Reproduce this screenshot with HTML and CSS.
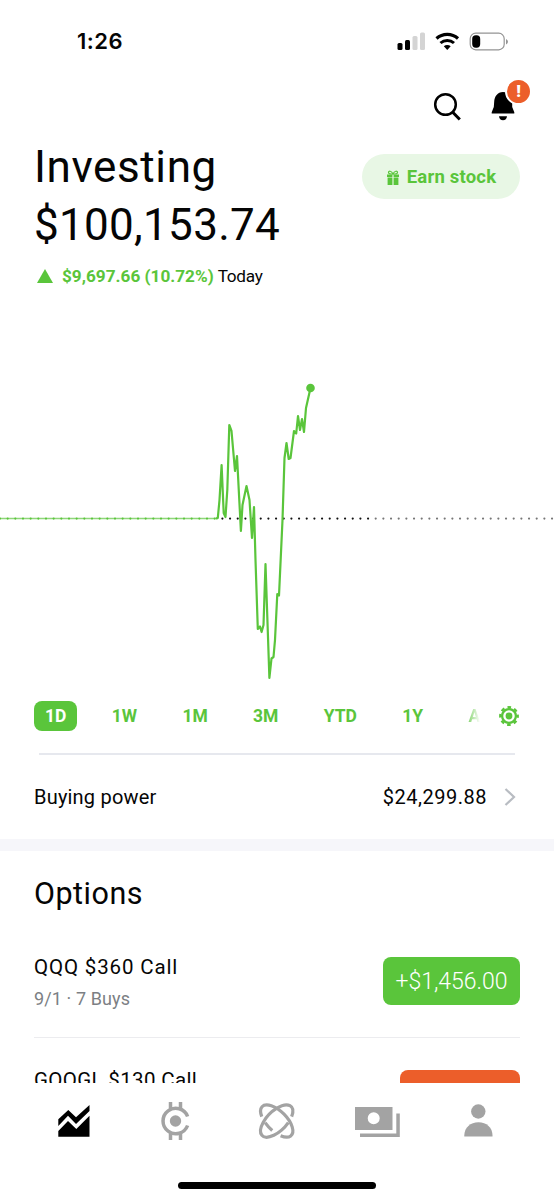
FILE: index.html
```html
<!DOCTYPE html>
<html lang="en">
<head>
    <meta charset="UTF-8">
    <meta name="viewport" content="width=device-width, initial-scale=1.0">
    <title>Investing</title>
    <link rel="stylesheet" href="styles.css">
</head>
<body>
    <div class="screen">

        <!-- Status bar -->
        <div class="status-bar">
            <span class="time">1:26</span>
            <svg class="status-icons" width="112" height="22" viewBox="0 0 112 22">
                <rect x="0.5" y="12" width="5" height="7" rx="1.5"/>
                <rect x="8" y="9" width="5" height="10" rx="1.5"/>
                <rect x="15.5" y="5" width="5" height="14" rx="1.5" fill="#d4d4d4"/>
                <rect x="23" y="1.5" width="5" height="17.5" rx="1.5" fill="#d4d4d4"/>
                <path d="M39.5 7.500a16 16 0 0 1 21.500 0" fill="none" stroke="#000" stroke-width="3.200"/>
                <path d="M43.500 12a10 10 0 0 1 13.500 0" fill="none" stroke="#000" stroke-width="3"/>
                <path d="M46.800 15.300a5 5 0 0 1 6.900 0L50.250 19z"/>
                <rect x="73.200" y="2.200" width="34" height="16.600" rx="5.500" fill="none" stroke="#949494" stroke-width="1.200"/>
                <rect x="75.200" y="4.300" width="8" height="12.400" rx="3.600"/>
                <path d="M109 8v5.500q2-1 2-2.750T109 8z" fill="#949494"/>
            </svg>
        </div>

        <div class="actions">
            <svg width="30" height="30" viewBox="0 0 30 30" fill="none" stroke="#000">
                <circle cx="12.500" cy="12.500" r="10.300" stroke-width="2.500"/>
                <path d="M19.500 20l7.300 7.500" stroke-width="3"/>
            </svg>
            <div class="bell">
                <svg width="24" height="30" viewBox="0 0 24 30">
                    <path d="M12 0C6.500 0 3.500 4.500 3.200 9.500L2.800 15 .7 20.300V21.500H23.300V20.300L21.200 15V9.500C20.500 4 17.500 0 12 0z"/>
                    <path d="M8 24.300h8q-.5 4-4 4t-4-4z"/>
                </svg>
                <span class="badge">!</span>
            </div>
        </div>

        <!-- Portfolio value -->
        <div class="portfolio">
            <div>
                <h1>Investing</h1>
                <div class="balance">$100,153.74</div>
                <div class="change">
                    <span class="triangle"></span>
                    <span class="gain">$9,697.66 (10.72%)</span>
                    <span class="today">Today</span>
                </div>
            </div>
            <button class="earn">
                <svg width="12" height="15" viewBox="0 0 12 15" fill="currentColor">
                    <path d="M0 4.500h5.400v2.500H0zM6.600 4.500H12v2.500H6.600zM.6 7.500h4.800V15H.6zM6.600 7.500h4.800V15H6.600z"/>
                    <path d="M6 4C4 4 1.500 4 1.500 2.400S4.500 .4 6 4C7.500 .4 10.500 .8 10.500 2.400S8 4 6 4z" fill="none" stroke="currentColor" stroke-width="1.200"/>
                </svg>
                <span>Earn stock</span>
            </button>
        </div>

        <svg class="chart" width="554" height="390" viewBox="0 300 554 390">
            <path class="dots" d="M222.400 518.600H372"/>
            <path class="dots closed" d="M375.700 518.600H554"/>
            <path class="flat" d="M0 518.500H218"/>
            <path class="flat-dots" d="M0 518.600H218"/>
            <polyline class="line" points="216,518.300 217.800,518 219.500,500 221.600,465 223.700,513 225.500,517 227.300,490 229.300,425 231.500,431 235,471 237,456 240.900,531 242.500,505 246.500,486 249.500,500 252,538 254,507 255.500,560 257.800,629 260,626.500 261.600,632 263.500,625 265.500,564 269.400,678 271.500,658.500 273.500,657 275,640 277.300,594 279,595.500 282.500,520 284.500,458 286.500,443 288.700,459 290.500,458 294,431 296.200,433.500 298,416 300,430 302,419 304,432 306,408 310.500,388"/>
            <circle cx="310.500" cy="388" r="4.300"/>
        </svg>

        <div class="ranges">
            <div class="range active">1D</div>
            <div class="range">1W</div>
            <div class="range">1M</div>
            <div class="range">3M</div>
            <div class="range">YTD</div>
            <div class="range">1Y</div>
            <div class="range faded">A</div>
            <svg class="gear" width="20" height="20" viewBox="-10 -10 20 20" fill="none" stroke="currentColor">
                <circle r="6.900" stroke-width="2.300"/>
                <circle r="8.700" stroke-width="2.400" stroke-dasharray="3.600 3.233" stroke-dashoffset="1.800"/>
                <circle r="3.400" fill="currentColor" stroke="none"/>
            </svg>
        </div>

        <div class="buying-power">
            <span>Buying power</span>
            <span class="amount">$24,299.88</span>
            <svg width="12" height="18" viewBox="0 0 12 18" fill="none" stroke="#b8bcc2" stroke-width="2.200">
                <path d="M1.500 1L10 9l-8.500 8"/>
            </svg>
        </div>

        <!-- Positions -->
        <div class="options">
            <h2>Options</h2>
            <div class="position">
                <div>
                    <div class="name wide">QQQ $360 Call</div>
                    <div class="detail">9/1 · 7 Buys</div>
                </div>
                <div class="value">+$1,456.00</div>
            </div>
            <div class="position">
                <div>
                    <div class="name">GOOGL $130 Call</div>
                    <div class="detail">&nbsp;</div>
                </div>
                <div class="value loss"></div>
            </div>
        </div>

        <!-- Bottom navigation -->
        <div class="tab-bar">
            <div class="tabs">
                <svg width="46" height="46" viewBox="0 0 46 46" fill="#000">
                    <path d="M7.300 21.300L17.300 12l7.700 7.300L38.500 7v6L25 26l-8-8.300L7.300 28z"/>
                    <path d="M7.300 33L17 23l8.300 8L38.500 17.700v21H7.300z"/>
                </svg>
                <svg width="46" height="46" viewBox="0 0 46 46" fill="none" stroke="#a3a3a3" stroke-width="3.500">
                    <path d="M35.600 18.500A12.700 12.700 0 1 0 35.600 27.500"/>
                    <path d="M18.500 4v7.500M28.500 4v7.500M18.500 34.500V42M28.500 34.500V42"/>
                    <circle cx="23.500" cy="23" r="5.700" fill="#a3a3a3" stroke="none"/>
                </svg>
                <svg width="46" height="46" viewBox="0 0 46 46" fill="none" stroke="#a3a3a3" stroke-width="3.200">
                    <g transform="translate(23.700 23) rotate(45)">
                        <path d="M-13.700 7.430A20.500 10 0 1 1 13.200 7.660"/>
                        <path d="M-7 9.400A20.500 10 0 0 0 3.560 9.850"/>
                    </g>
                    <g transform="translate(23.700 23) scale(-1 1) rotate(45)">
                        <path d="M-13.700 7.430A20.500 10 0 1 1 -7 9.400"/>
                    </g>
                </svg>
                <svg width="46" height="46" viewBox="0 0 46 46" fill="#a3a3a3">
                    <path fill-rule="evenodd" d="M1 9h37.500v23H1zM19.700 14.300a6 6 0 1 0 0 12 6 6 0 0 0 0-12z"/>
                    <path d="M42.300 15.500h3.500v23.500H6V35.500H42.300z"/>
                </svg>
                <svg width="46" height="46" viewBox="0 0 46 46" fill="#a3a3a3">
                    <circle cx="23.300" cy="13.500" r="7.200"/>
                    <path d="M9.300 38.500v-1C9.300 29.500 15.500 24.200 23.500 24.200S37.500 29.500 37.500 37.500v1z"/>
                </svg>
            </div>
            <div class="home-indicator"></div>
        </div>
    </div>
</body>
</html>
```

FILE: styles.css
```css
* {
    box-sizing: border-box;
}

body {
    margin: 0;
    background: #fff;
    color: #050505;
    font-family: Roboto, "Liberation Sans", sans-serif;
}

.screen {
    width: 554px;
    height: 1200px;
    display: flex;
    flex-direction: column;
    overflow: hidden;
}

.status-bar {
    height: 82px;
    flex-shrink: 0;
    display: flex;
    justify-content: space-between;
    padding: 28px 45px 0 77px;
}

.time {
    font-family: Inter, sans-serif;
    font-size: 22px;
    font-weight: 600;
    line-height: 27px;
    letter-spacing: 0.5px;
}

.status-icons {
    margin-top: 3px;
}

.actions {
    height: 56px;
    flex-shrink: 0;
    display: flex;
    justify-content: flex-end;
    gap: 28px;
    padding: 10px 39px 0 0;
}

.bell {
    position: relative;
}

.badge {
    position: absolute;
    top: -14px;
    right: -17px;
    width: 27px;
    height: 27px;
    border: 2px solid #fff;
    border-radius: 50%;
    background: #ec5e2a;
    color: #fff;
    font-size: 17px;
    font-weight: 900;
    line-height: 23px;
    text-align: center;
}

.portfolio {
    height: 162px;
    flex-shrink: 0;
    display: flex;
    justify-content: space-between;
    align-items: flex-start;
    padding: 0 34px;
}

h1,
.balance {
    margin: 0;
    font-size: 44px;
    font-weight: 400;
    line-height: 58px;
    letter-spacing: 0.3px;
}

h1 {
    letter-spacing: 0.6px;
}

.change {
    display: flex;
    align-items: center;
    height: 44px;
    font-size: 17.2px;
}

.triangle {
    margin: 0 9px 0 3px;
    border-left: 8px solid transparent;
    border-right: 8px solid transparent;
    border-bottom: 14px solid #5ac53b;
}

.gain {
    color: #5ac53b;
    font-weight: 700;
    margin-right: 4px;
}

.today {
    letter-spacing: -0.3px;
}

.earn {
    display: flex;
    align-items: center;
    justify-content: center;
    gap: 8px;
    width: 158px;
    height: 45px;
    margin-top: 16px;
    padding: 1px 0 0 1px;
    border: none;
    border-radius: 23px;
    background: #e8f7e5;
    color: #5ac53b;
    font-family: inherit;
    font-size: 18.5px;
    font-weight: 700;
    letter-spacing: 0.2px;
}

.chart {
    display: block;
    flex-shrink: 0;
    fill: #5ac53b;
}

.line {
    fill: none;
    stroke: #5ac53b;
    stroke-width: 2.2;
    stroke-linejoin: round;
}

.flat {
    stroke: #8fd67a;
    stroke-width: 1.6;
}

.dots,
.flat-dots {
    stroke: #111;
    stroke-width: 2.2;
    stroke-linecap: round;
    stroke-dasharray: 0 7.667;
}

.closed {
    stroke: #777;
}

.flat-dots {
    stroke: #5ac53b;
}

.ranges {
    height: 65px;
    flex-shrink: 0;
    display: flex;
    align-items: center;
    gap: 23.3px;
    margin: 0 39px;
    padding-bottom: 11px;
    border-bottom: 2px solid #e6e8ee;
    color: #5ac53b;
}

.range {
    flex-shrink: 0;
    padding: 0 11px;
    font-size: 17.5px;
    font-weight: 700;
    line-height: 30px;
}

.active {
    margin-left: -5px;
    border-radius: 8px;
    background: #5ac53b;
    color: #fff;
}

.faded {
    padding-right: 0;
    background: linear-gradient(90deg, #5ac53b 30%, #fff);
    background-clip: text;
    color: transparent;
}

.gear {
    flex-shrink: 0;
    margin-left: -4.5px;
}

.buying-power {
    height: 96px;
    flex-shrink: 0;
    display: flex;
    align-items: center;
    padding: 0 38px 0 34px;
    border-bottom: 12px solid #f6f6fa;
    font-size: 20px;
    letter-spacing: 0.2px;
}

.amount {
    margin-left: auto;
    margin-right: 17px;
    letter-spacing: 0.5px;
}

.options {
    flex: 1;
    min-height: 0;
    overflow: hidden;
    padding: 0 34px;
}

h2 {
    margin: 0;
    padding-top: 24px;
    height: 74px;
    font-size: 30.5px;
    font-weight: 400;
    line-height: 38px;
    letter-spacing: 0.5px;
}

.position {
    height: 113px;
    display: flex;
    justify-content: space-between;
    align-items: center;
    border-bottom: 1px solid #ececef;
}

.name {
    padding-top: 3px;
    font-size: 20.5px;
    line-height: 31px;
    letter-spacing: 0.35px;
}

.wide {
    letter-spacing: 0.85px;
}

.detail {
    font-size: 18px;
    line-height: 31px;
    letter-spacing: 0.1px;
    color: #7c7f84;
}

.value {
    width: 137px;
    height: 48px;
    border-radius: 8px;
    background: #5ac53b;
    color: #fff;
    font-size: 23px;
    font-weight: 300;
    line-height: 50px;
    text-align: center;
}

.loss {
    width: 120px;
    background: #ec5e2a;
}

.tab-bar {
    height: 117px;
    flex-shrink: 0;
    background: #fff;
}

.tabs {
    height: 99px;
    display: flex;
    justify-content: space-between;
    padding: 15px 53px 0 51px;
}

.home-indicator {
    width: 198px;
    height: 7px;
    margin: 0 auto;
    border-radius: 4px;
    background: #000;
}
```
